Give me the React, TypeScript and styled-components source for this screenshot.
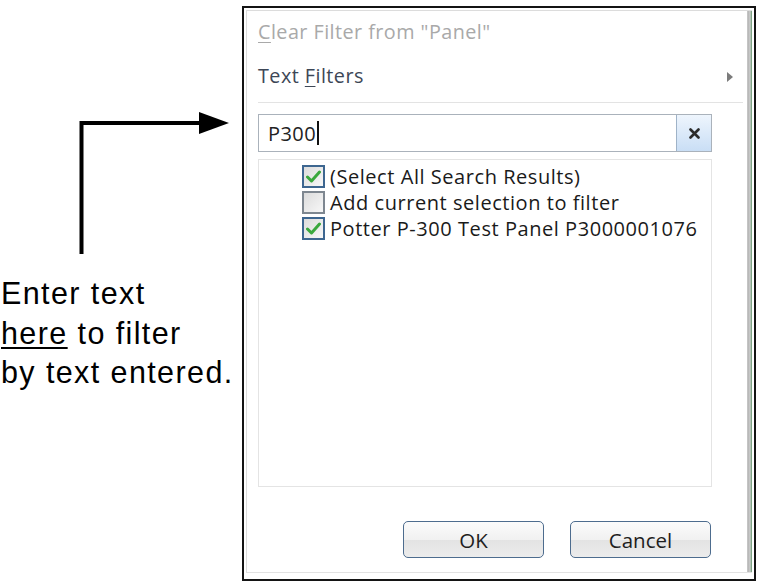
import React from "react";
import styled, { createGlobalStyle } from "styled-components";

const Global = createGlobalStyle`
  html, body { margin: 0; padding: 0; background: #ffffff; }
  body { font-family: "Liberation Sans", Arial, sans-serif; }
`;

const Page = styled.div`
  display: flex;
  align-items: flex-start;
  width: 760px;
  height: 587px;
  overflow: hidden;
`;

const Annotation = styled.div`
  width: 242px;
  flex: none;
  display: flex;
  flex-direction: column;
  padding-top: 112px;
`;

const ArrowArt = styled.svg`
  display: block;
  margin-left: 78px;
  width: 152px;
  height: 142px;
`;

const Note = styled.div`
  margin-top: 20px;
  padding-left: 1px;
  font-family: "Liberation Sans", Arial, sans-serif;
  font-size: 30.5px;
  letter-spacing: 1.4px;
  line-height: 39.5px;
  color: #000;
  white-space: nowrap;
`;

const Under = styled.span`
  text-decoration: underline;
  text-underline-offset: 3px;
  text-decoration-thickness: 2px;
`;

const Dialog = styled.div`
  margin-top: 6px;
  width: 514px;
  height: 575px;
  box-sizing: border-box;
  border: 2px solid #141414;
  background: #ffffff;
  padding: 2px 2px 6px 2px;
  display: flex;
`;

const Frame = styled.div`
  flex: 1;
  display: flex;
  border-top: 1px solid #dcdcdc;
  border-left: 1px solid #dcdcdc;
  border-bottom: 1px solid #e2e2e2;
`;

const Body = styled.div`
  flex: 1;
  display: flex;
  flex-direction: column;
  padding: 0 0 0 11px;
  font-family: "Open Sans", "Noto Sans", sans-serif;
  letter-spacing: 0.45px;
`;

const EdgeBar = styled.div`
  width: 5px;
  flex: none;
  background: linear-gradient(to right, #c9c9c9 0, #b4b4b4 2px, #d8d8d8 3px, #8fae94 4px, #6f9a78 5px);
`;

const MenuItem = styled.div<{ $muted?: boolean }>`
  height: 44px;
  box-sizing: border-box;
  padding-bottom: 4px;
  display: flex;
  align-items: center;
  justify-content: space-between;
  padding-right: 14px;
  font-size: 19.8px;
  color: ${(p) => (p.$muted ? "#a9a9a9" : "#3d4756")};
`;

const Key = styled.span`
  text-decoration: underline;
  text-underline-offset: 3px;
`;

const SubArrow = styled.span`
  width: 0;
  height: 0;
  margin-top: 4px;
  border-top: 5px solid transparent;
  border-bottom: 5px solid transparent;
  border-left: 6px solid #7b7b7b;
`;

const Separator = styled.div`
  height: 1px;
  background: #e3e3e3;
  margin: 3px 4px 0 0;
`;

const SearchRow = styled.div`
  margin-top: 11px;
  width: 454px;
  height: 38px;
  box-sizing: border-box;
  display: flex;
  border: 1px solid #aab2bb;
`;

const SearchField = styled.div`
  flex: 1;
  display: flex;
  align-items: center;
  padding-left: 9px;
  font-size: 20px;
  color: #222;
`;

const Caret = styled.span`
  display: inline-block;
  width: 1.5px;
  height: 24px;
  background: #111;
  margin-left: 1px;
`;

const ClearButton = styled.div`
  width: 34px;
  flex: none;
  border-left: 1px solid #9fb3c8;
  background: linear-gradient(to bottom, #eef5fd, #c9def5);
  display: flex;
  align-items: center;
  justify-content: center;
`;

const ListBox = styled.div`
  margin-top: 7px;
  width: 454px;
  height: 328px;
  box-sizing: border-box;
  border: 1px solid #e4e4e4;
  padding: 3px 0 0 43px;
  display: flex;
  flex-direction: column;
`;

const ListRow = styled.div`
  height: 26px;
  display: flex;
  align-items: center;
  gap: 5px;
  font-size: 20px;
  letter-spacing: 0.55px;
  color: #1a1a1a;
  white-space: nowrap;
`;

const Box = styled.span<{ $checked?: boolean }>`
  width: 23px;
  height: 23px;
  box-sizing: border-box;
  flex: none;
  border: 2px solid ${(p) => (p.$checked ? "#3d6690" : "#7e8790")};
  background: linear-gradient(135deg, #dcdcdc, #f7f7f7);
  display: flex;
  align-items: center;
  justify-content: center;
`;

const Footer = styled.div`
  margin-top: auto;
  display: flex;
  justify-content: flex-end;
  gap: 26px;
  padding: 0 36px 14px 0;
`;

const Button = styled.button`
  width: 141px;
  height: 37px;
  box-sizing: border-box;
  border: 1.5px solid #4d6c8e;
  border-radius: 5px;
  background: linear-gradient(to bottom, #fbfbfb 0%, #f1f1f1 50%, #e3e3e3 51%, #ececec 100%);
  font-family: "Open Sans", "Noto Sans", sans-serif;
  font-size: 20.5px;
  color: #1e1e1e;
  padding: 0;
`;

const Check = () => (
  <svg width="15" height="13" viewBox="0 0 15 13">
    <path d="M1.5 7 L5.5 11 L13.5 2" fill="none" stroke="#3aa83d" strokeWidth="3" strokeLinecap="round" strokeLinejoin="round" />
  </svg>
);

const rows = [
  { label: "(Select All Search Results)", checked: true },
  { label: "Add current selection to filter", checked: false },
  { label: "Potter P-300 Test Panel P3000001076", checked: true },
];

export default function App() {
  return (
    <>
      <Global />
      <Page>
        <Annotation>
          <ArrowArt viewBox="0 0 152 142">
            <path d="M3.5 142 V11 H124" fill="none" stroke="#000" strokeWidth="4" />
            <polygon points="121,0 151,11 121,22" fill="#000" />
          </ArrowArt>
          <Note>
            Enter text
            <br />
            <Under>here</Under> to filter
            <br />
            by text entered.
          </Note>
        </Annotation>
        <Dialog>
          <Frame>
            <Body>
              <MenuItem $muted>
                <span>
                  <Key>C</Key>lear Filter from "Panel"
                </span>
              </MenuItem>
              <MenuItem>
                <span>
                  Text <Key>F</Key>ilters
                </span>
                <SubArrow />
              </MenuItem>
              <Separator />
              <SearchRow>
                <SearchField>
                  P300
                  <Caret />
                </SearchField>
                <ClearButton>
                  <svg width="11" height="11" viewBox="0 0 11 11">
                    <path d="M1.5 1.5 L9.5 9.5 M9.5 1.5 L1.5 9.5" stroke="#2b2b2b" strokeWidth="2.6" strokeLinecap="round" />
                  </svg>
                </ClearButton>
              </SearchRow>
              <ListBox>
                {rows.map((r) => (
                  <ListRow key={r.label}>
                    <Box $checked={r.checked}>{r.checked && <Check />}</Box>
                    {r.label}
                  </ListRow>
                ))}
              </ListBox>
              <Footer>
                <Button>OK</Button>
                <Button>Cancel</Button>
              </Footer>
            </Body>
            <EdgeBar />
          </Frame>
        </Dialog>
      </Page>
    </>
  );
}
